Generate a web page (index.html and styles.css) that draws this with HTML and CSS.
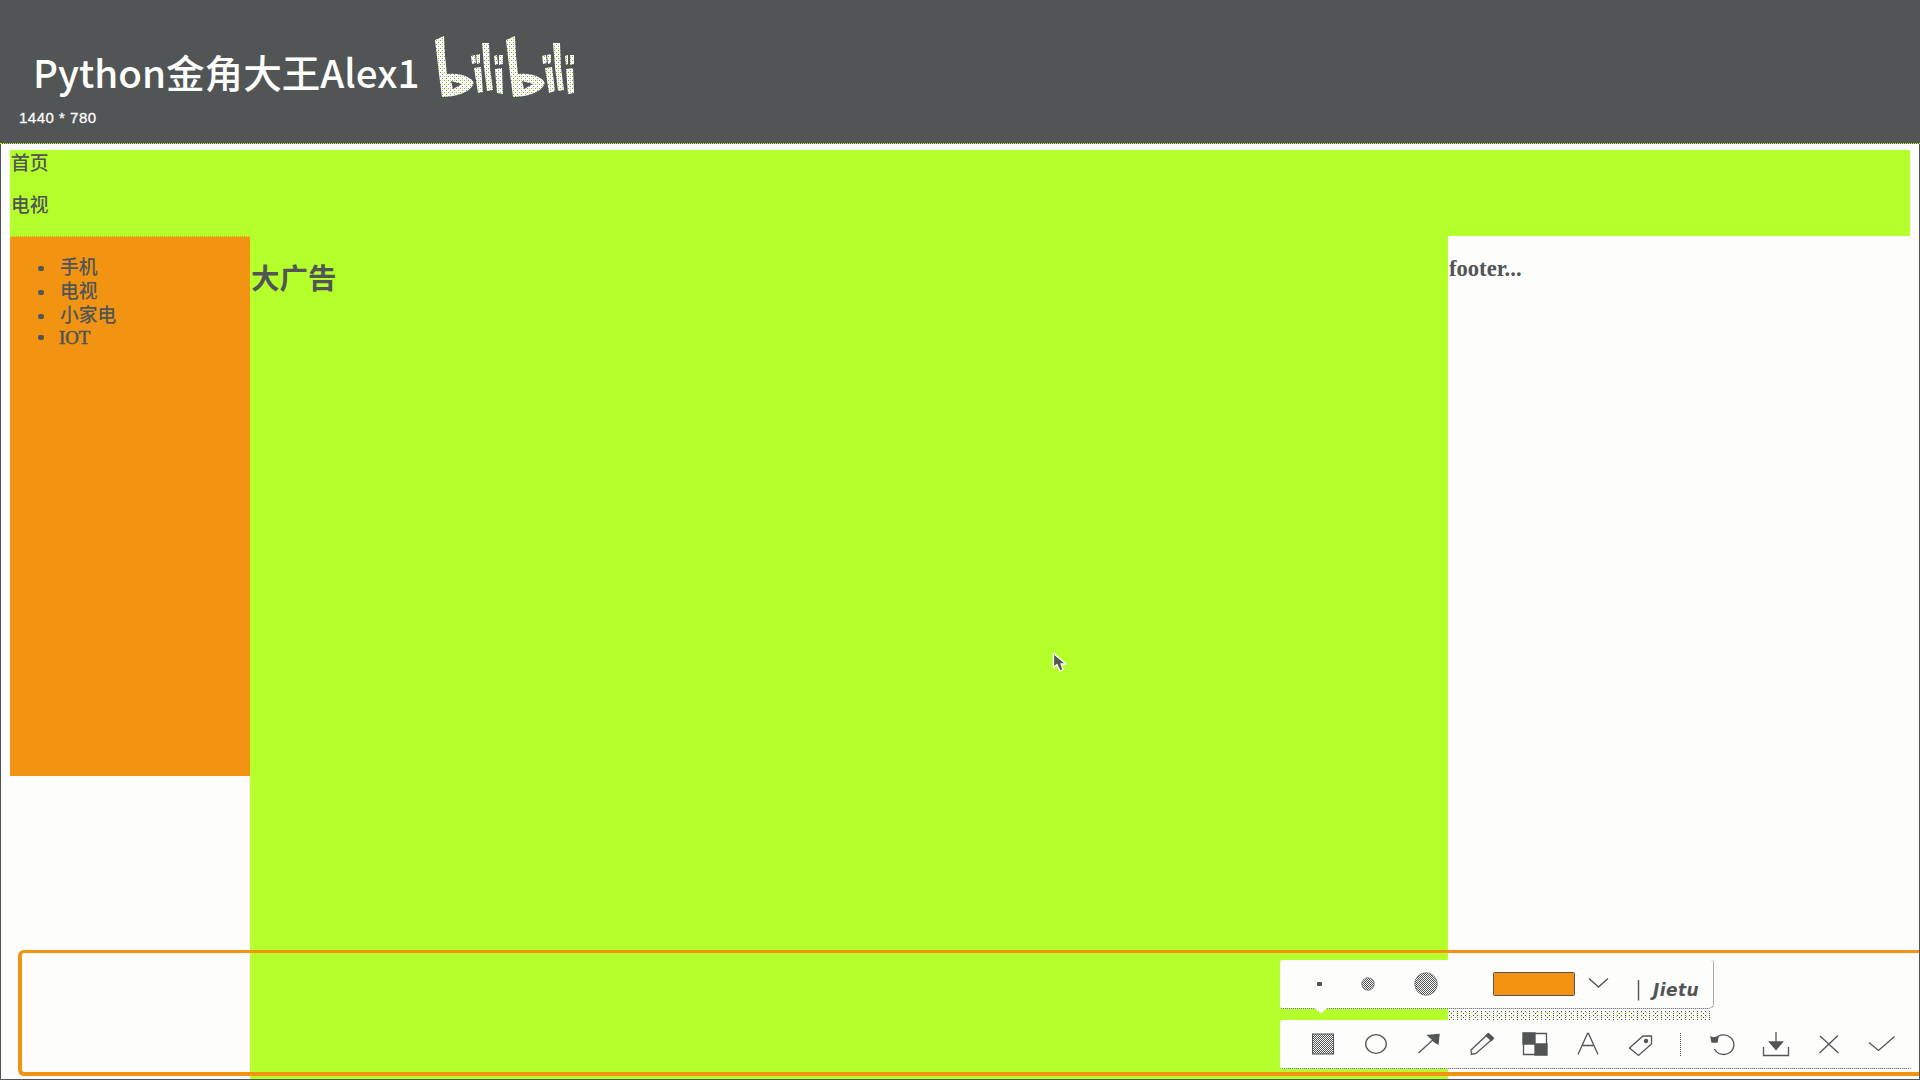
FILE: index.html
```html
<!DOCTYPE html>
<html lang="zh">
<head>
<meta charset="utf-8">
<title>Layout</title>
<link rel="stylesheet" href="styles.css">
</head>
<body>
<div class="screen">
  <header class="banner">
    <div class="brand">
      <span class="author">Python金角大王Alex1</span>
      <svg class="logo" width="140" height="62" viewBox="435 36 140 62" fill-rule="evenodd" aria-label="bilibili">
        <defs>
          <pattern id="grain" width="4" height="4" patternUnits="userSpaceOnUse">
            <path d="M0 0h4v4H0z" fill="#fdfdfb"/>
            <path d="M0 0h1v1H0zM2 2h1v1H2z" fill="#515556" opacity=".6"/>
            <path d="M2 0h1v1H2z" fill="#b5ff2b"/>
          </pattern>
        </defs>
        <g fill="url(#grain)">
          <path id="tall" d="M435 40L444 36 445 56 447 74Q461 73 469 78 475 81 473 85C469 93 455 97 442 97L439 74ZM451 81L453 89 462 84Z"/>
          <path d="M471 56l4-1 1 8-4 1zM476 55l4-1 0 9-3 1zM474 68l7-1 2 25-5 1zM482 43h7l1 25 3 22-6 1-3-24zM494 56l3-1 1 9-3 1zM499 55h4v9l-4 1zM495 69l7-1 1 26-6-1z"/>
          <use href="#tall" x="71"/>
          <path d="M542 56l4-1 1 8-4 1zM547 55l4-1 0 9-3 1zM545 68l7-1 3 24-6 2zM553 43h7l1 25 3 22-6 1-3-24zM565 56l3-1 0 9-2 1zM570 55h4v9l-4 1zM566 69l7-1 1 25-6 1z"/>
        </g>
      </svg>
    </div>
    <div class="size">1440 * 780</div>
  </header>

  <main class="page">
    <nav class="nav"><p>首页</p><p>电视</p></nav>
    <div class="columns">
      <aside class="side">
        <ul>
          <li>手机</li>
          <li>电视</li>
          <li>小家电</li>
          <li class="latin">IOT</li>
        </ul>
      </aside>
      <section class="ad"><h1>大广告</h1></section>
      <footer class="foot"><h3>footer...</h3></footer>
    </div>
  </main>

  <div class="selection"></div>

  <div class="panel options">
    <svg width="434" height="56" viewBox="1280 960 434 56" fill="none" stroke="#515556" stroke-width="1.4">
      <defs>
        <pattern id="mesh" width="2" height="2" patternUnits="userSpaceOnUse">
          <path d="M0 0h1v1H0zM1 1h1v1H1z" fill="#515556" stroke="none"/>
        </pattern>
      </defs>
      <path d="M1314 1007.5L1321 1013.5 1328 1007.5Z" fill="#fdfdfb" stroke="none"/>
      <rect x="1317" y="982" width="5" height="4" rx="1" fill="#515556" stroke="none"/>
      <circle cx="1368" cy="984" r="6.3" fill="url(#mesh)" stroke-width=".6"/>
      <circle cx="1426" cy="984" r="11.3" fill="url(#mesh)" stroke-width=".6"/>
      <rect x="1493.5" y="972.5" width="81" height="23" rx="1" fill="#f29411" stroke-width="1"/>
      <path d="M1589 978.5L1598.5 987 1608 978.5M1638.5 980v20.5"/>
    </svg>
    <span class="mark">Jietu</span>
  </div>

  <div class="shade"></div>

  <div class="panel tools">
    <svg class="tool" viewBox="-14 -14 28 28"><rect x="-10.5" y="-10" width="21" height="20" fill="url(#mesh)" stroke-width="1"/></svg>
    <svg class="tool" viewBox="-14 -14 28 28"><ellipse rx="10.3" ry="9.3"/></svg>
    <svg class="tool" viewBox="-14 -14 28 28"><path d="M-10.500 9L6-6"/><path class="solid" d="M-1-8.500L10-9.500 9 0 5-2.500 3-5Z"/></svg>
    <svg class="tool" viewBox="-14 -14 28 28"><path d="M-11 6L5.500-9.500 10.500-5-6 9.500-10.500 10.500Z"/><path class="solid" d="M4-8.500L6.500-10.500 11.500-6 9.500-3.500Z"/></svg>
    <svg class="tool" viewBox="-14 -14 28 28"><path d="M-11.500-10.500h23v21h-23z"/><path class="solid" d="M-12-11H0V0h-12zM0 0h12v11H0z"/></svg>
    <svg class="tool" viewBox="-14 -14 28 28"><path d="M-10 10.500L-.500-10.500H.500L10 10.500M-6 1.500h12"/></svg>
    <svg class="tool" viewBox="-14 -14 28 28"><path d="M-11.500 4L2-8H10.500V0L-2.500 11.500Z"/><circle class="solid" cx="5" cy="-3" r="1.6"/></svg>
    <span class="divider"></span>
    <svg class="tool" viewBox="-14 -14 28 28"><path d="M-8-4.500A10.200 9.800 0 1 1-8.500 5"/><path class="solid" d="M-12-7L-9-6-5-7-6-2-11-2Z"/></svg>
    <svg class="tool" viewBox="-14 -14 28 28"><path d="M0-12V0M-12.500 3v8.500h25V3"/><path class="solid" d="M-6.500-2h13L0 5.500Z"/></svg>
    <svg class="tool" viewBox="-14 -14 28 28"><path d="M-9-8L9.500 9M9-8.500L-9.500 9"/></svg>
    <svg class="tool" viewBox="-14 -14 28 28"><path d="M-13-1.500L-3.500 6.500 12.500-7.500"/></svg>
  </div>

  <svg class="pointer" width="16" height="21" viewBox="0 0 16 21"><path d="M1.500 1.500V15.500L5 12.500 8 19 11 17.500 9 12H14Z" fill="#515556" stroke="#fdfdfb" stroke-width="1.3"/></svg>
</div>
</body>
</html>
```
FILE: styles.css
```css
* { box-sizing: border-box; }

body {
  margin: 0;
  color: #515556;
  font: 18.8px/24px "Liberation Serif", "Noto Sans CJK SC", serif;
}

.screen {
  position: relative;
  display: flex;
  flex-direction: column;
  width: 1920px;
  height: 1080px;
  overflow: hidden;
  background: #515556;
}

.banner {
  height: 144px;
  flex: none;
  padding: 36px 0 0 33px;
  color: #fdfdfb;
  border-bottom: 1px dotted #b5ff2b;
}

.brand { display: flex; height: 72px; }

.author {
  width: 402px;
  padding-top: 7px;
  font: 500 38.6px/56px "Noto Sans CJK SC", sans-serif;
  white-space: nowrap;
}

.logo { flex: none; }

.size {
  margin-left: -14px;
  font: 15px/20px "Liberation Sans", sans-serif;
  letter-spacing: .5px;
  -webkit-text-stroke: .3px #fdfdfb;
}

.page {
  display: flex;
  flex-direction: column;
  flex: 1;
  margin: 0 1px 1px;
  padding: 6px 9px 0;
  background: #fdfdfb;
}

.nav {
  height: 86px;
  padding: 2px 0 0 1px;
  background: #b5ff2b;
  font-weight: 500;
}

.nav p { margin: 0 0 18px; }

.columns { display: flex; flex: 1; }

.side {
  width: 240px;
  height: 540px;
  background: #f29411;
  border-top: 1px dotted #b5ff2b;
}

.side ul {
  margin: 19px 0 0;
  padding: 0 0 0 49px;
  list-style: none;
  font-weight: 500;
}

.side li {
  display: flex;
  align-items: center;
  height: 24px;
}

.side li::before {
  content: "";
  width: 6px;
  height: 5px;
  margin: 0 16px 0 -21px;
  border-radius: 2px;
  background: #515556;
}

.side .latin {
  height: 19px;
  font-size: 18.8px;
  -webkit-text-stroke: .6px #515556;
}

.side .latin::before { margin-right: 15px; }

.ad { width: 1198px; background: #b5ff2b; }

.ad h1 {
  margin: 20px 0 0 1px;
  font: 700 28.5px/42px "Noto Sans CJK SC", sans-serif;
}

.foot h3 { margin: 20px 0 0 1px; font-size: 22.6px; line-height: 26px; }

.selection {
  position: absolute;
  left: 18px;
  top: 950px;
  width: 1901px;
  height: 126px;
  border: 4px solid #f29411;
  border-top-width: 3px;
  border-right: 0;
  border-radius: 6px 0 0 6px;
}

.panel {
  position: absolute;
  left: 1280px;
  background: #fdfdfb;
  border-radius: 3px;
}

.options {
  top: 960px;
  width: 434px;
  height: 49px;
  border-right: 1px dotted #515556;
  border-bottom: 1px dotted #515556;
  border-radius: 3px 3px 6px 3px;
}

.options svg { display: block; overflow: visible; }

.mark {
  position: absolute;
  left: 373px;
  top: 19px;
  font: italic 700 17px/22px "DejaVu Sans", sans-serif;
  letter-spacing: .4px;
}

.shade {
  position: absolute;
  left: 1448px;
  top: 1010px;
  width: 262px;
  height: 10px;
  background:
    radial-gradient(circle at 1.5px 1.5px, #515556 .6px, transparent .7px) 0 0 / 4px 4px,
    radial-gradient(circle at 1.5px 1.5px, #515556 .6px, transparent .7px) 2px 2px / 6px 4px,
    radial-gradient(circle at 1.5px 1.5px, #b5ff2b .6px, transparent .7px) 2px 1px / 5px 4px;
}

.tools {
  top: 1020px;
  display: flex;
  align-items: center;
  width: 632px;
  height: 49px;
  padding-left: 16px;
  border-bottom: 1px dotted #515556;
}

.tool {
  flex: none;
  width: 28px;
  height: 28px;
  margin: 0 12.5px;
  fill: none;
  stroke: #515556;
  stroke-width: 1.3;
}

.tool .solid { fill: #515556; }

.divider {
  width: 1px;
  height: 23px;
  margin: 0 15px 0 13px;
  border-left: 1px dotted #515556;
}

.pointer {
  position: absolute;
  left: 1052px;
  top: 652px;
}
```
